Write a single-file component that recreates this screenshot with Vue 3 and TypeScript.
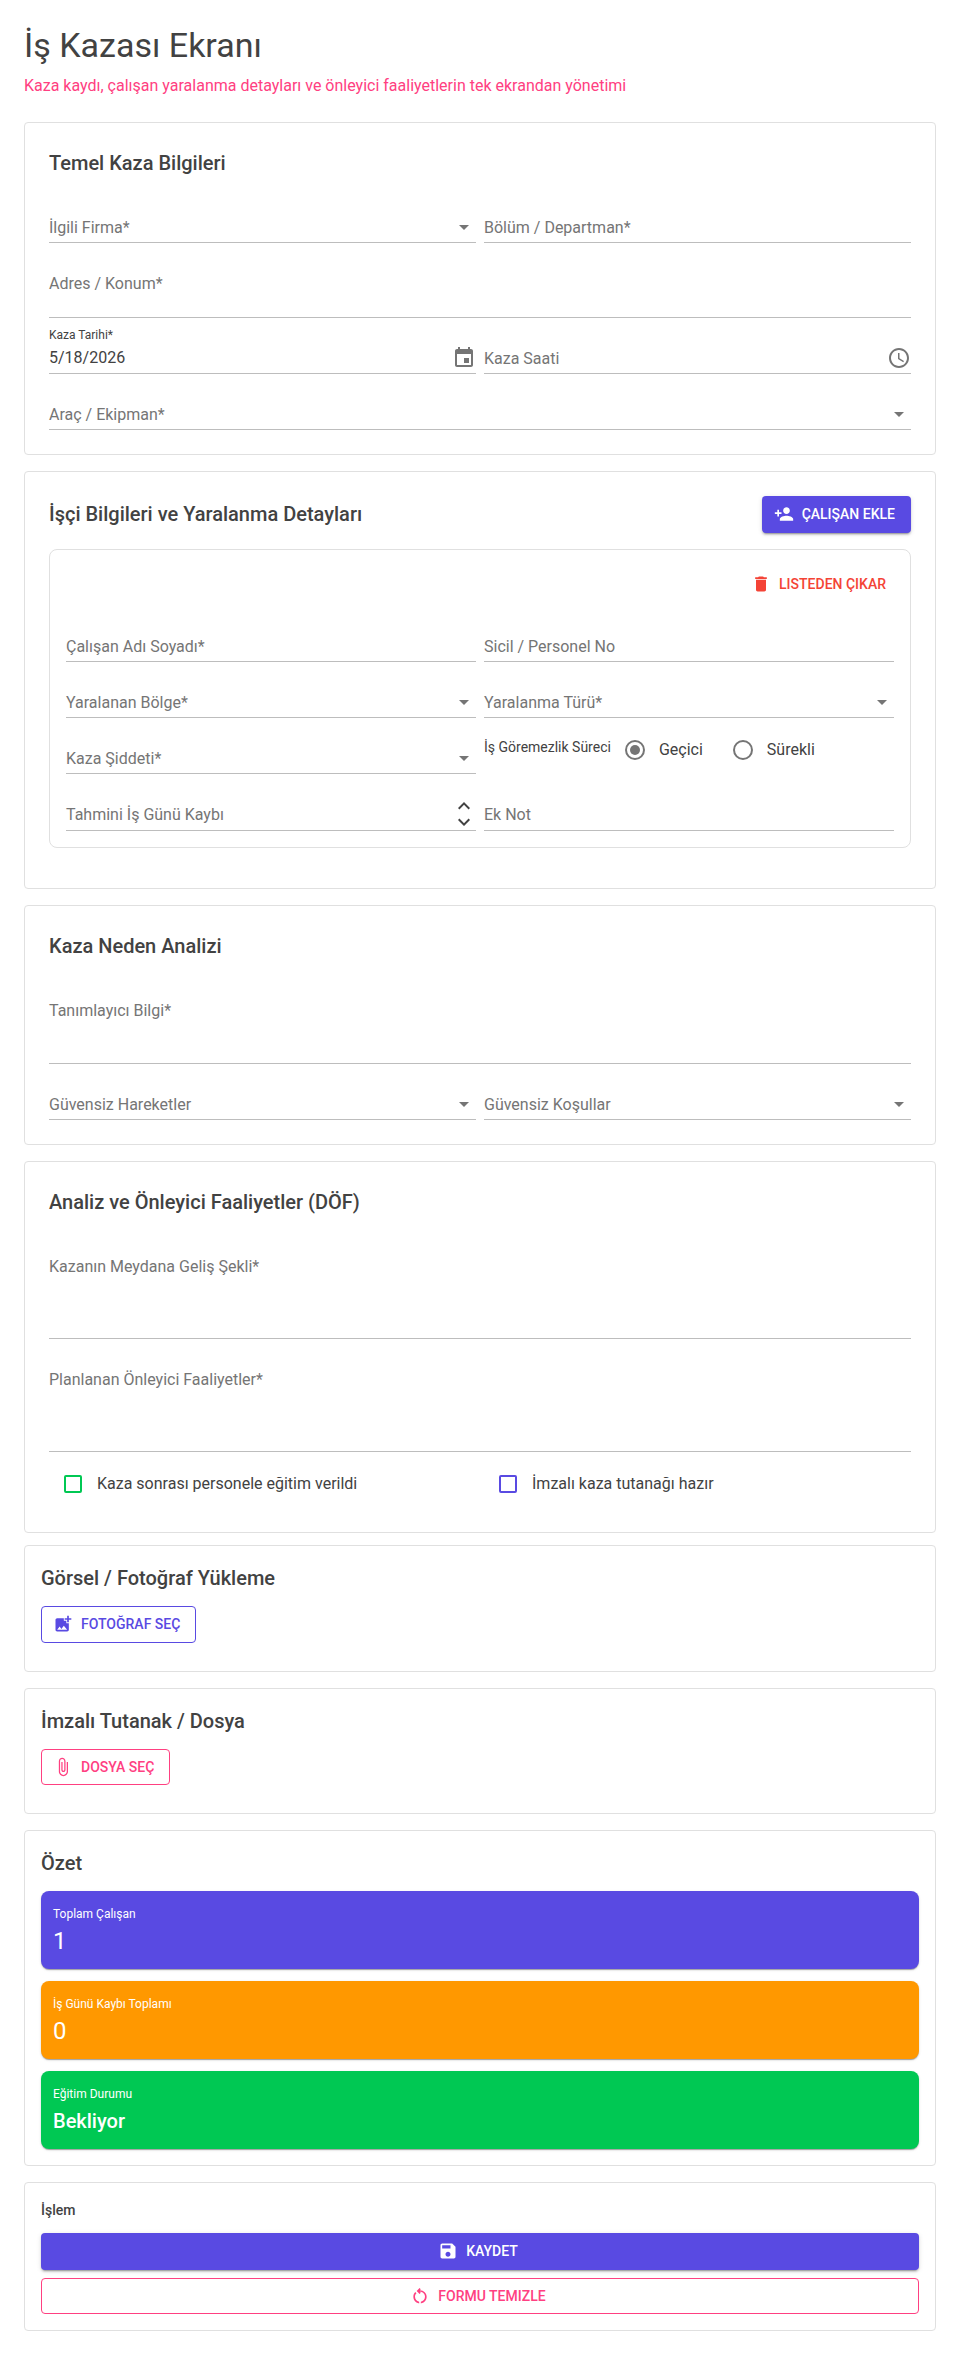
<script setup lang="ts">
import { computed, reactive, ref } from 'vue'

interface Worker {
  id: number
  name: string
  registry: string
  bodyPart: string
  injuryType: string
  severity: string
  incapacity: 'Geçici' | 'Sürekli'
  lostDays: string
  note: string
}

let nextId = 1
const createWorker = (): Worker => ({
  id: nextId++,
  name: '',
  registry: '',
  bodyPart: '',
  injuryType: '',
  severity: '',
  incapacity: 'Geçici',
  lostDays: '',
  note: '',
})

const emptyForm = () => ({
  company: '',
  department: '',
  address: '',
  date: '5/18/2026',
  time: '',
  equipment: '',
  description: '',
  unsafeActs: '',
  unsafeConditions: '',
  howItHappened: '',
  plannedActions: '',
  trained: false,
  signed: false,
})

const form = reactive(emptyForm())
const workers = ref<Worker[]>([createWorker()])

const totalLostDays = computed(() => workers.value.reduce((sum, w) => sum + (Number(w.lostDays) || 0), 0))
const trainingStatus = computed(() => (form.trained ? 'Verildi' : 'Bekliyor'))

const addWorker = () => workers.value.push(createWorker())
const removeWorker = (id: number) => {
  workers.value = workers.value.filter((w) => w.id !== id)
}
const stepDays = (worker: Worker, delta: number) => {
  worker.lostDays = String(Math.max(0, (Number(worker.lostDays) || 0) + delta))
}
const clearForm = () => {
  Object.assign(form, emptyForm())
  workers.value = [createWorker()]
}
</script>

<template>
  <main class="page">
    <header class="page-head">
      <h1>İş Kazası Ekranı</h1>
      <p>Kaza kaydı, çalışan yaralanma detayları ve önleyici faaliyetlerin tek ekrandan yönetimi</p>
    </header>

    <form class="sections" @submit.prevent>
      <section class="card">
        <h2>Temel Kaza Bilgileri</h2>
        <div class="grid">
          <div class="field" :class="{ filled: form.company }">
            <label for="company">İlgili Firma*</label>
            <select id="company" v-model="form.company"><option value=""></option></select>
            <svg class="adorn" viewBox="0 0 24 24"><path d="M7 10l5 5 5-5z" /></svg>
          </div>
          <div class="field" :class="{ filled: form.department }">
            <label for="department">Bölüm / Departman*</label>
            <input id="department" v-model="form.department" type="text" />
          </div>
          <div class="field wide" :class="{ filled: form.address }">
            <label for="address">Adres / Konum*</label>
            <textarea id="address" v-model="form.address" rows="2"></textarea>
          </div>
          <div class="field" :class="{ filled: form.date }">
            <label for="date">Kaza Tarihi*</label>
            <input id="date" v-model="form.date" type="text" />
            <svg class="adorn" viewBox="0 0 24 24"><path d="M17 12h-5v5h5v-5zM16 1v2H8V1H6v2H5c-1.11 0-1.99.9-1.99 2L3 19c0 1.1.89 2 2 2h14c1.1 0 2-.9 2-2V5c0-1.1-.9-2-2-2h-1V1h-2zm3 18H5V8h14v11z" /></svg>
          </div>
          <div class="field" :class="{ filled: form.time }">
            <label for="time">Kaza Saati</label>
            <input id="time" v-model="form.time" type="text" />
            <svg class="adorn" viewBox="0 0 24 24"><path d="M11.99 2C6.47 2 2 6.48 2 12s4.47 10 9.99 10C17.52 22 22 17.52 22 12S17.52 2 11.99 2zM12 20c-4.42 0-8-3.58-8-8s3.58-8 8-8 8 3.58 8 8-3.58 8-8 8zm.5-13H11v6l5.25 3.15.75-1.23-4.5-2.67z" /></svg>
          </div>
          <div class="field wide" :class="{ filled: form.equipment }">
            <label for="equipment">Araç / Ekipman*</label>
            <select id="equipment" v-model="form.equipment"><option value=""></option></select>
            <svg class="adorn" viewBox="0 0 24 24"><path d="M7 10l5 5 5-5z" /></svg>
          </div>
        </div>
      </section>

      <section class="card">
        <div class="card-head">
          <h2>İşçi Bilgileri ve Yaralanma Detayları</h2>
          <button type="button" class="btn solid" @click="addWorker">
            <svg viewBox="0 0 24 24"><path d="M15 12c2.21 0 4-1.79 4-4s-1.79-4-4-4-4 1.79-4 4 1.79 4 4 4zm-9-2V7H4v3H1v2h3v3h2v-3h3v-2H6zm9 4c-2.67 0-8 1.34-8 4v2h16v-2c0-2.66-5.33-4-8-4z" /></svg>
            ÇALIŞAN EKLE
          </button>
        </div>
        <div v-for="w in workers" :key="w.id" class="worker">
          <div class="worker-actions">
            <button type="button" class="btn text danger" @click="removeWorker(w.id)">
              <svg viewBox="0 0 24 24"><path d="M6 19c0 1.1.9 2 2 2h8c1.1 0 2-.9 2-2V7H6v12zM19 4h-3.5l-1-1h-5l-1 1H5v2h14V4z" /></svg>
              LISTEDEN ÇIKAR
            </button>
          </div>
          <div class="grid">
            <div class="field" :class="{ filled: w.name }">
              <label :for="`name-${w.id}`">Çalışan Adı Soyadı*</label>
              <input :id="`name-${w.id}`" v-model="w.name" type="text" />
            </div>
            <div class="field" :class="{ filled: w.registry }">
              <label :for="`registry-${w.id}`">Sicil / Personel No</label>
              <input :id="`registry-${w.id}`" v-model="w.registry" type="text" />
            </div>
            <div class="field" :class="{ filled: w.bodyPart }">
              <label :for="`part-${w.id}`">Yaralanan Bölge*</label>
              <select :id="`part-${w.id}`" v-model="w.bodyPart"><option value=""></option></select>
              <svg class="adorn" viewBox="0 0 24 24"><path d="M7 10l5 5 5-5z" /></svg>
            </div>
            <div class="field" :class="{ filled: w.injuryType }">
              <label :for="`type-${w.id}`">Yaralanma Türü*</label>
              <select :id="`type-${w.id}`" v-model="w.injuryType"><option value=""></option></select>
              <svg class="adorn" viewBox="0 0 24 24"><path d="M7 10l5 5 5-5z" /></svg>
            </div>
            <div class="field" :class="{ filled: w.severity }">
              <label :for="`severity-${w.id}`">Kaza Şiddeti*</label>
              <select :id="`severity-${w.id}`" v-model="w.severity"><option value=""></option></select>
              <svg class="adorn" viewBox="0 0 24 24"><path d="M7 10l5 5 5-5z" /></svg>
            </div>
            <fieldset class="radios" :aria-labelledby="`incapacity-${w.id}`">
              <span :id="`incapacity-${w.id}`" class="radios-label">İş Göremezlik Süreci</span>
              <label class="radio">
                <input v-model="w.incapacity" type="radio" :name="`incapacity-${w.id}`" value="Geçici" />
                Geçici
              </label>
              <label class="radio">
                <input v-model="w.incapacity" type="radio" :name="`incapacity-${w.id}`" value="Sürekli" />
                Sürekli
              </label>
            </fieldset>
            <div class="field" :class="{ filled: w.lostDays }">
              <label :for="`days-${w.id}`">Tahmini İş Günü Kaybı</label>
              <input :id="`days-${w.id}`" v-model="w.lostDays" type="text" inputmode="numeric" />
              <div class="spin">
                <button type="button" aria-label="Artır" @click="stepDays(w, 1)">
                  <svg viewBox="0 0 24 24"><path d="M12 8l-6 6 1.41 1.41L12 10.83l4.59 4.58L18 14z" /></svg>
                </button>
                <button type="button" aria-label="Azalt" @click="stepDays(w, -1)">
                  <svg viewBox="0 0 24 24"><path d="M16.59 8.59L12 13.17 7.41 8.59 6 10l6 6 6-6z" /></svg>
                </button>
              </div>
            </div>
            <div class="field" :class="{ filled: w.note }">
              <label :for="`note-${w.id}`">Ek Not</label>
              <input :id="`note-${w.id}`" v-model="w.note" type="text" />
            </div>
          </div>
        </div>
      </section>

      <section class="card">
        <h2>Kaza Neden Analizi</h2>
        <div class="grid">
          <div class="field wide" :class="{ filled: form.description }">
            <label for="description">Tanımlayıcı Bilgi*</label>
            <textarea id="description" v-model="form.description" rows="3"></textarea>
          </div>
          <div class="field" :class="{ filled: form.unsafeActs }">
            <label for="acts">Güvensiz Hareketler</label>
            <select id="acts" v-model="form.unsafeActs"><option value=""></option></select>
            <svg class="adorn" viewBox="0 0 24 24"><path d="M7 10l5 5 5-5z" /></svg>
          </div>
          <div class="field" :class="{ filled: form.unsafeConditions }">
            <label for="conditions">Güvensiz Koşullar</label>
            <select id="conditions" v-model="form.unsafeConditions"><option value=""></option></select>
            <svg class="adorn" viewBox="0 0 24 24"><path d="M7 10l5 5 5-5z" /></svg>
          </div>
        </div>
      </section>

      <section class="card">
        <h2>Analiz ve Önleyici Faaliyetler (DÖF)</h2>
        <div class="grid">
          <div class="field wide" :class="{ filled: form.howItHappened }">
            <label for="how">Kazanın Meydana Geliş Şekli*</label>
            <textarea id="how" v-model="form.howItHappened" rows="4"></textarea>
          </div>
          <div class="field wide" :class="{ filled: form.plannedActions }">
            <label for="planned">Planlanan Önleyici Faaliyetler*</label>
            <textarea id="planned" v-model="form.plannedActions" rows="4"></textarea>
          </div>
          <label class="check green">
            <input v-model="form.trained" type="checkbox" />
            Kaza sonrası personele eğitim verildi
          </label>
          <label class="check violet">
            <input v-model="form.signed" type="checkbox" />
            İmzalı kaza tutanağı hazır
          </label>
        </div>
      </section>
    </form>

    <aside class="sections">
      <section class="card compact upload">
        <h2>Görsel / Fotoğraf Yükleme</h2>
        <button type="button" class="btn outline violet">
          <svg viewBox="0 0 24 24"><path d="M19 7v2.99s-1.99.01-2 0V7h-3s.01-1.99 0-2h3V2h2v3h3v2h-3zm-3 4V8h-3V5H5c-1.1 0-2 .9-2 2v12c0 1.1.9 2 2 2h12c1.1 0 2-.9 2-2v-8h-3zM5 19l3-4 2 3 3-4 4 5H5z" /></svg>
          FOTOĞRAF SEÇ
        </button>
      </section>

      <section class="card compact upload">
        <h2>İmzalı Tutanak / Dosya</h2>
        <button type="button" class="btn outline pink">
          <svg viewBox="0 0 24 24"><path d="M16.5 6v11.5c0 2.21-1.79 4-4 4s-4-1.79-4-4V5c0-1.38 1.12-2.5 2.5-2.5s2.5 1.12 2.5 2.5v10.5c0 .55-.45 1-1 1s-1-.45-1-1V6H10v9.5c0 1.38 1.12 2.5 2.5 2.5s2.5-1.12 2.5-2.5V5c0-2.21-1.79-4-4-4S7 2.79 7 5v12.5c0 3.04 2.46 5.5 5.5 5.5s5.5-2.46 5.5-5.5V6h-1.5z" /></svg>
          DOSYA SEÇ
        </button>
      </section>

      <section class="card compact">
        <h2>Özet</h2>
        <div class="tiles">
          <div class="tile violet">
            <span>Toplam Çalışan</span>
            <strong>{{ workers.length }}</strong>
          </div>
          <div class="tile orange">
            <span>İş Günü Kaybı Toplamı</span>
            <strong>{{ totalLostDays }}</strong>
          </div>
          <div class="tile green">
            <span>Eğitim Durumu</span>
            <strong class="status">{{ trainingStatus }}</strong>
          </div>
        </div>
      </section>

      <section class="card compact">
        <h3>İşlem</h3>
        <div class="actions">
          <button type="button" class="btn solid">
            <svg viewBox="0 0 24 24"><path d="M17 3H5c-1.11 0-2 .9-2 2v14c0 1.1.89 2 2 2h14c1.1 0 2-.9 2-2V7l-4-4zm-5 16c-1.66 0-3-1.34-3-3s1.34-3 3-3 3 1.34 3 3-1.34 3-3 3zm3-10H5V5h10v4z" /></svg>
            KAYDET
          </button>
          <button type="button" class="btn outline pink" @click="clearForm">
            <svg viewBox="0 0 24 24"><path d="M6 13c0-1.65.67-3.15 1.76-4.24L6.34 7.34C4.9 8.79 4 10.79 4 13c0 4.08 3.05 7.44 7 7.93v-2.02c-2.83-.48-5-2.94-5-5.91zm14 0c0-4.42-3.58-8-8-8-.06 0-.12.01-.18.01l1.09-1.09L11.5 2.5 8 6l3.5 3.5 1.41-1.41-1.08-1.08c.06 0 .12-.01.17-.01 3.31 0 6 2.69 6 6 0 2.97-2.17 5.43-5 5.91v2.02c3.95-.49 7-3.85 7-7.93z" /></svg>
            FORMU TEMIZLE
          </button>
        </div>
      </section>
    </aside>
  </main>
</template>

<style>
body {
  margin: 0;
  background: #fff;
}
</style>

<style scoped>
.page {
  --violet: #594ae2;
  --pink: #ff4081;
  --green: #00c853;
  --orange: #ff9800;
  --red: #f44336;
  --ink: #424242;
  --muted: #757575;
  padding: 24px;
  display: flex;
  flex-direction: column;
  gap: 12px;
  color: var(--ink);
  font-family: Roboto, 'Liberation Sans', sans-serif;
  font-size: 16px;
  line-height: 24px;
}
.page *,
.page *::before {
  box-sizing: border-box;
}
h1,
h2,
h3,
p {
  margin: 0;
}
.page-head {
  display: flex;
  flex-direction: column;
  gap: 8px;
  margin-bottom: 12px;
}
h1 {
  font-size: 34px;
  line-height: 42px;
  font-weight: 400;
}
.page-head p {
  color: var(--pink);
}
h2 {
  font-size: 20px;
  line-height: 32px;
  font-weight: 500;
}
h3 {
  font-size: 14px;
  line-height: 22px;
  font-weight: 500;
}
.sections {
  display: flex;
  flex-direction: column;
  gap: 16px;
}
.card {
  display: flex;
  flex-direction: column;
  gap: 16px;
  padding: 24px;
  border: 1px solid #e0e0e0;
  border-radius: 4px;
}
.card.compact {
  padding: 16px;
  gap: 12px;
}
.card.upload {
  align-items: flex-start;
  padding-bottom: 28px;
}
.card-head {
  display: flex;
  align-items: center;
  justify-content: space-between;
}
.grid {
  display: grid;
  grid-template-columns: repeat(2, minmax(0, 1fr));
  gap: 8px;
}
.wide {
  grid-column: 1 / -1;
}

/* Underlined text fields with a floating label */
.field {
  position: relative;
  display: flex;
  padding-top: 16px;
  border-bottom: 1px solid #bdbdbd;
}
.field > label {
  position: absolute;
  top: 24px;
  left: 0;
  font-size: 16px;
  line-height: 18px;
  color: var(--muted);
  pointer-events: none;
}
.field.filled > label {
  top: 0;
  font-size: 12px;
  color: var(--ink);
}
.field input,
.field select,
.field textarea {
  flex: 1;
  min-width: 0;
  margin: 0;
  padding: 6px 0;
  border: 0;
  outline: 0;
  background: none;
  color: inherit;
  font: inherit;
  line-height: 19px;
  appearance: none;
  resize: none;
}
.field input,
.field select {
  height: 31px;
}
.adorn {
  width: 24px;
  height: 24px;
  margin-top: 4px;
  fill: var(--muted);
  pointer-events: none;
}
.field select + .adorn {
  margin-left: -24px;
}
.spin {
  display: flex;
  flex-direction: column;
  align-items: center;
  width: 24px;
}
.spin button {
  display: flex;
  align-items: center;
  justify-content: center;
  width: 24px;
  height: 16px;
  padding: 0;
  border: 0;
  background: none;
  cursor: pointer;
}
.spin svg {
  flex: none;
  width: 24px;
  height: 24px;
  fill: var(--ink);
}

/* Radio buttons and tick boxes */
.radios {
  display: flex;
  align-items: flex-start;
  margin: 0;
  padding: 3px 0 0;
  border: 0;
  min-width: 0;
}
.radios-label {
  margin-right: 14px;
  font-size: 14px;
  line-height: 36px;
}
.radio {
  display: flex;
  align-items: center;
  gap: 14px;
  height: 42px;
  margin-right: 30px;
}
.radio input {
  display: grid;
  place-items: center;
  appearance: none;
  width: 20px;
  height: 20px;
  margin: 0;
  border: 2px solid var(--muted);
  border-radius: 50%;
}
.radio input:checked::before {
  content: '';
  width: 10px;
  height: 10px;
  border-radius: 50%;
  background: var(--muted);
}
.check {
  display: flex;
  align-items: center;
  gap: 15px;
  height: 48px;
  padding-left: 15px;
}
.check input {
  appearance: none;
  width: 18px;
  height: 18px;
  margin: 0;
  border: 2px solid currentColor;
  border-radius: 2px;
}
.check input:checked {
  background: currentColor;
}
.check.green input {
  color: var(--green);
}
.check.violet input {
  color: var(--violet);
}

.worker {
  display: flex;
  flex-direction: column;
  gap: 12px;
  margin-bottom: 16px;
  padding: 16px;
  border: 1px solid #e0e0e0;
  border-radius: 8px;
}
.worker-actions {
  display: flex;
  justify-content: flex-end;
}

.btn {
  display: flex;
  align-items: center;
  justify-content: center;
  gap: 8px;
  padding: 6px 16px 6px 12px;
  border: 0;
  border-radius: 4px;
  background: none;
  font-family: inherit;
  font-size: 14px;
  font-weight: 500;
  line-height: 1.75;
  cursor: pointer;
}
.btn svg {
  width: 20px;
  height: 20px;
  fill: currentColor;
}
.btn.solid {
  background: var(--violet);
  color: #fff;
  box-shadow: 0 3px 1px -2px rgba(0, 0, 0, 0.2), 0 2px 2px rgba(0, 0, 0, 0.14), 0 1px 5px rgba(0, 0, 0, 0.12);
}
.btn.text {
  padding: 6px 8px 6px 4px;
}
.btn.danger {
  color: var(--red);
}
.btn.outline {
  padding: 5px 15px 5px 11px;
  border: 1px solid currentColor;
}
.btn.violet {
  color: var(--violet);
}
.btn.pink {
  color: var(--pink);
}

.tiles {
  display: flex;
  flex-direction: column;
  gap: 12px;
}
.tile {
  display: flex;
  flex-direction: column;
  padding: 12px;
  border-radius: 8px;
  color: #fff;
  box-shadow: 0 2px 1px -1px rgba(0, 0, 0, 0.2), 0 1px 1px rgba(0, 0, 0, 0.14), 0 1px 3px rgba(0, 0, 0, 0.12);
}
.tile.violet {
  background: var(--violet);
}
.tile.orange {
  background: var(--orange);
}
.tile.green {
  background: var(--green);
}
.tile span {
  font-size: 12px;
  line-height: 22px;
}
.tile strong {
  font-size: 24px;
  line-height: 32px;
  font-weight: 400;
}
.tile .status {
  font-size: 20px;
  font-weight: 500;
}
.actions {
  display: flex;
  flex-direction: column;
  gap: 8px;
}
</style>
